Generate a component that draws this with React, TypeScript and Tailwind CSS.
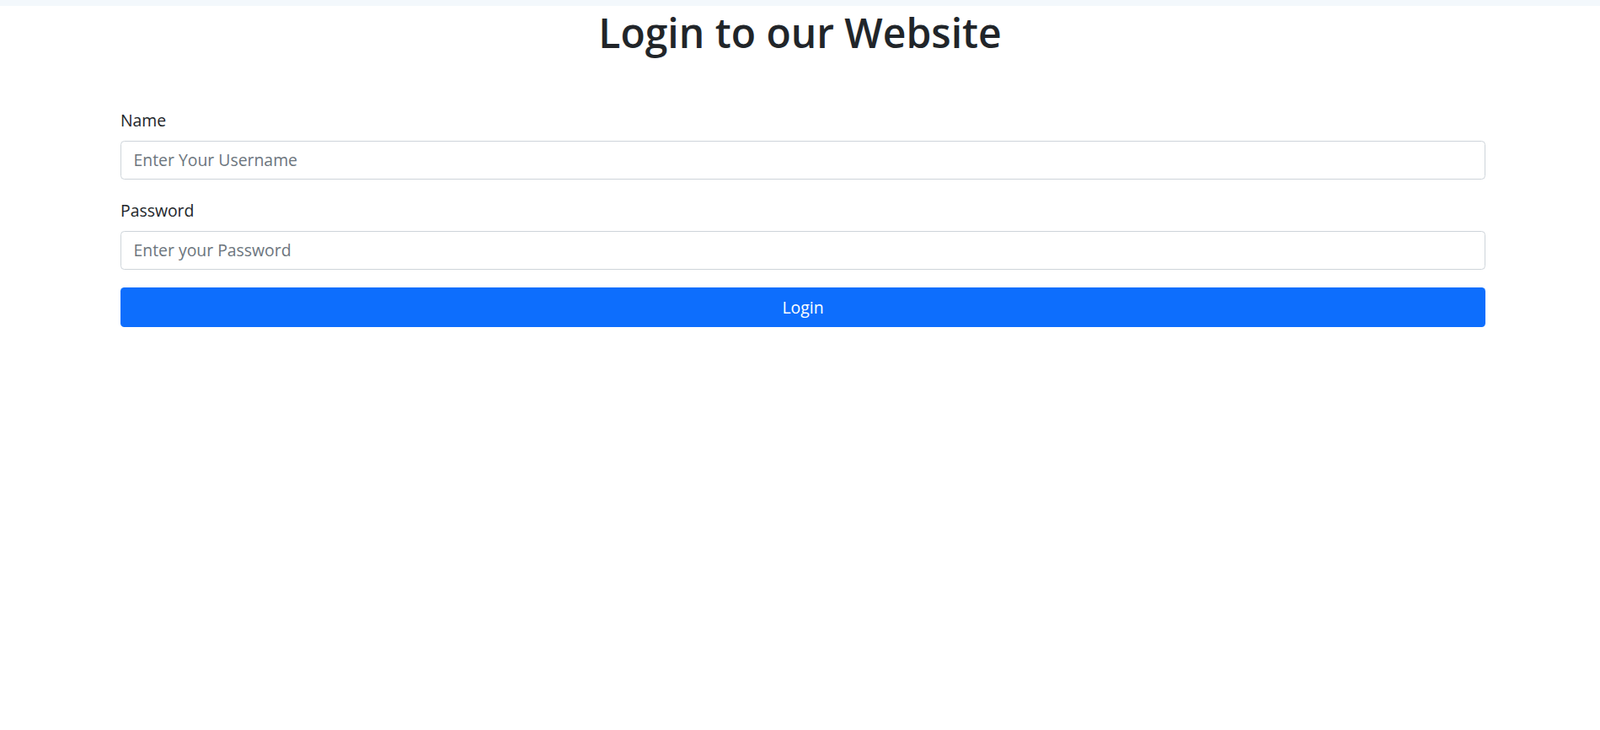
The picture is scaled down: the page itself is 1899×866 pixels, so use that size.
export default function App() {
  return (
    <div className="min-h-screen bg-white text-[#212529]" style={{ fontFamily: '"Open Sans", "Noto Sans", sans-serif' }}>
      {/* thin top bar */}
      <div className="h-[7px] bg-[#f3f8fc]" />

      <h1 className="text-center text-[48px] font-semibold leading-[1.2] mt-[3px]">Login to our Website</h1>

      <form className="pl-[143px] pr-[136px] pt-[60px]" onSubmit={(e) => e.preventDefault()}>
        <div className="mb-[22px]">
          <label htmlFor="name" className="block text-[19.4px] leading-[29px] mb-[10px]">
            Name
          </label>
          <input
            id="name"
            type="text"
            placeholder="Enter Your Username"
            className="block w-full h-[46px] px-[14.5px] text-[19.4px] border border-[#ced4da] rounded-[4.5px] placeholder:text-[#6c757d] outline-none"
          />
        </div>

        <div className="mb-[21px]">
          <label htmlFor="password" className="block text-[19.4px] leading-[29px] mb-[10px]">
            Password
          </label>
          <input
            id="password"
            type="password"
            placeholder="Enter your Password"
            className="block w-full h-[46px] px-[14.5px] text-[19.4px] border border-[#ced4da] rounded-[4.5px] placeholder:text-[#6c757d] outline-none"
          />
        </div>

        <button type="submit" className="block w-full h-[47px] bg-[#0d6efd] text-white text-[19.4px] rounded-[4.5px]">
          Login
        </button>
      </form>
    </div>
  )
}
